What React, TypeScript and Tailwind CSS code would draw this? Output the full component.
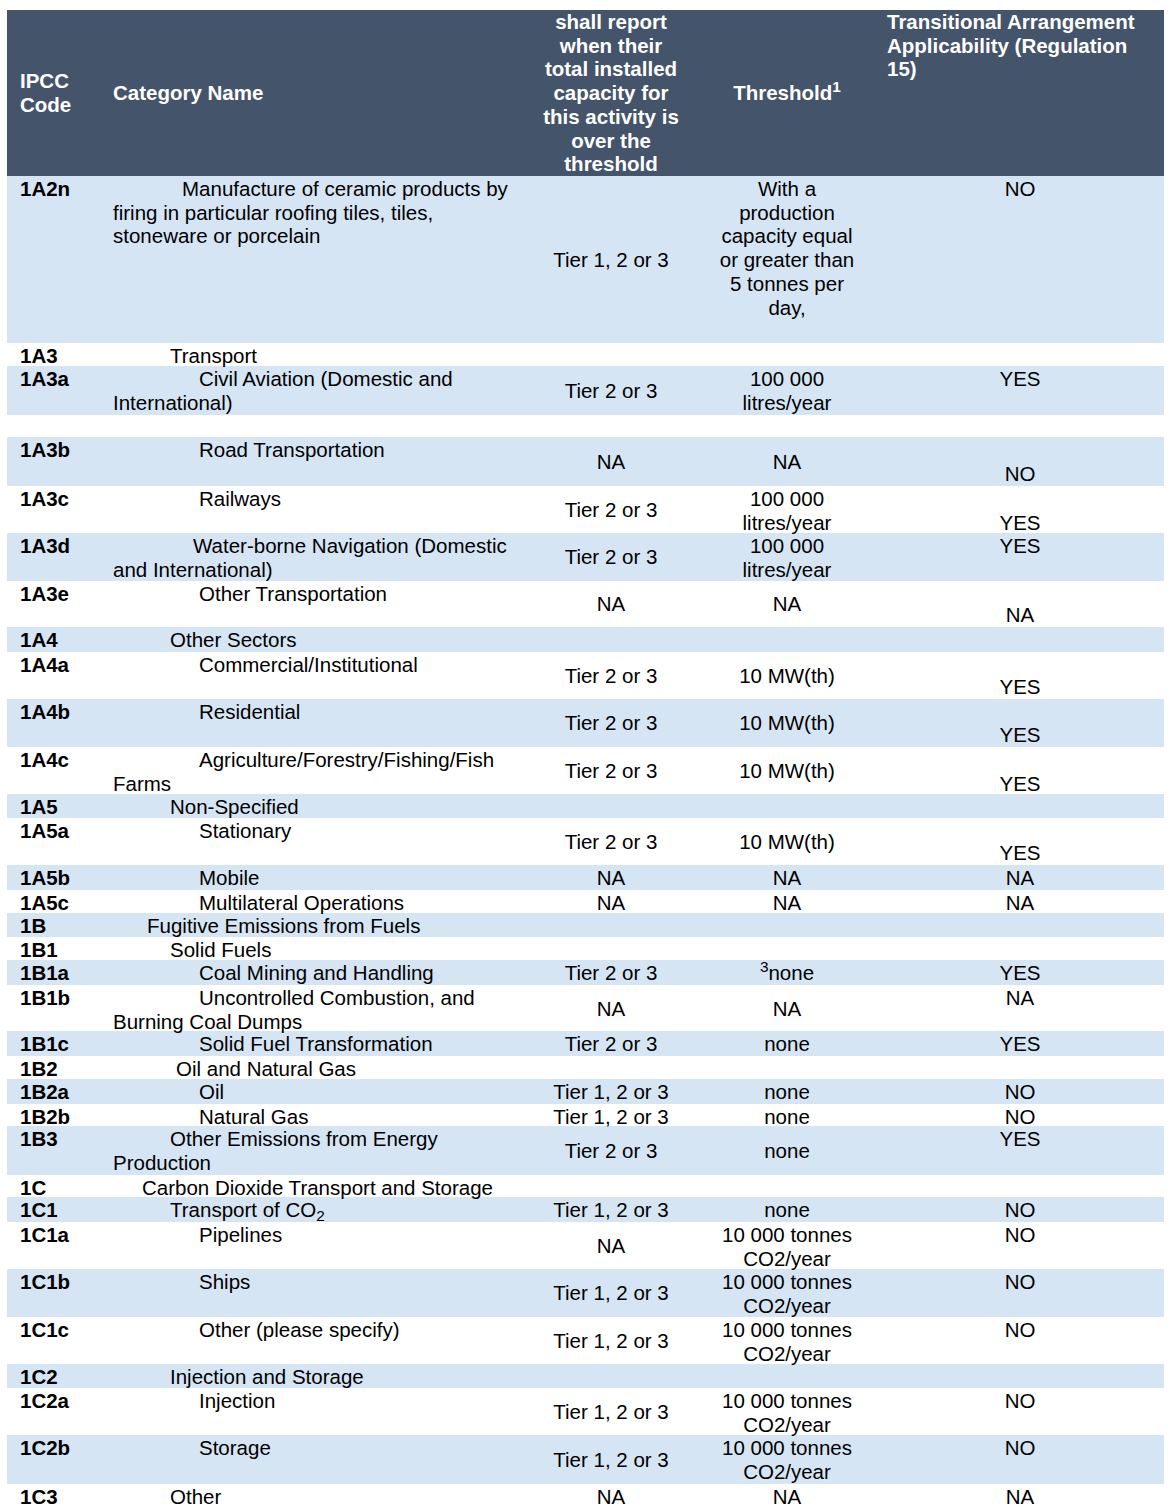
import type { ReactNode } from 'react';

type Align = 'top' | 'middle' | 'bottom';

type Cell = { text: ReactNode; align: Align };

type Row = {
  code: string;
  name: ReactNode;
  indent: string;
  height: string;
  tier?: Cell;
  threshold?: Cell;
  transitional?: Cell;
};

const COLS = 'grid grid-cols-[93px_424px_174px_178px_288px]';

const ALIGN: Record<Align, string> = {
  top: 'justify-start pt-px',
  middle: 'justify-center',
  bottom: 'justify-end',
};

const top = (text: ReactNode): Cell => ({ text, align: 'top' });
const mid = (text: ReactNode): Cell => ({ text, align: 'middle' });
const bot = (text: ReactNode): Cell => ({ text, align: 'bottom' });

const litres = (
  <>
    100 000
    <br />
    litres/year
  </>
);

const tonnes = (
  <>
    10 000 tonnes
    <br />
    CO2/year
  </>
);

const ROWS: Row[] = [
  {
    code: '1A2n',
    name: 'Manufacture of ceramic products by firing in particular roofing tiles, tiles, stoneware or porcelain',
    indent: 'indent-[69px]',
    height: 'h-[167px]',
    tier: mid('Tier 1, 2 or 3'),
    threshold: top('With a production capacity equal or greater than 5 tonnes per day,'),
    transitional: top('NO'),
  },
  { code: '1A3', name: 'Transport', indent: 'indent-[57px]', height: 'h-[23px]' },
  {
    code: '1A3a',
    name: 'Civil Aviation (Domestic and International)',
    indent: 'indent-[86px]',
    height: 'h-[49px]',
    tier: mid('Tier 2 or 3'),
    threshold: top(litres),
    transitional: top('YES'),
  },
  { code: '', name: '', indent: 'indent-0', height: 'h-[22px]' },
  {
    code: '1A3b',
    name: 'Road Transportation',
    indent: 'indent-[86px]',
    height: 'h-[49px]',
    tier: mid('NA'),
    threshold: mid('NA'),
    transitional: bot('NO'),
  },
  {
    code: '1A3c',
    name: 'Railways',
    indent: 'indent-[86px]',
    height: 'h-[47px]',
    tier: mid('Tier 2 or 3'),
    threshold: top(litres),
    transitional: bot('YES'),
  },
  {
    code: '1A3d',
    name: 'Water-borne Navigation (Domestic and International)',
    indent: 'indent-[80px]',
    height: 'h-[48px]',
    tier: mid('Tier 2 or 3'),
    threshold: top(litres),
    transitional: top('YES'),
  },
  {
    code: '1A3e',
    name: 'Other Transportation',
    indent: 'indent-[86px]',
    height: 'h-[46px]',
    tier: mid('NA'),
    threshold: mid('NA'),
    transitional: bot('NA'),
  },
  { code: '1A4', name: 'Other Sectors', indent: 'indent-[57px]', height: 'h-[25px]' },
  {
    code: '1A4a',
    name: 'Commercial/Institutional',
    indent: 'indent-[86px]',
    height: 'h-[47px]',
    tier: mid('Tier 2 or 3'),
    threshold: mid('10 MW(th)'),
    transitional: bot('YES'),
  },
  {
    code: '1A4b',
    name: 'Residential',
    indent: 'indent-[86px]',
    height: 'h-[48px]',
    tier: mid('Tier 2 or 3'),
    threshold: mid('10 MW(th)'),
    transitional: bot('YES'),
  },
  {
    code: '1A4c',
    name: 'Agriculture/Forestry/Fishing/Fish Farms',
    indent: 'indent-[86px]',
    height: 'h-[47px]',
    tier: mid('Tier 2 or 3'),
    threshold: mid('10 MW(th)'),
    transitional: bot('YES'),
  },
  { code: '1A5', name: 'Non-Specified', indent: 'indent-[57px]', height: 'h-[24px]' },
  {
    code: '1A5a',
    name: 'Stationary',
    indent: 'indent-[86px]',
    height: 'h-[47px]',
    tier: mid('Tier 2 or 3'),
    threshold: mid('10 MW(th)'),
    transitional: bot('YES'),
  },
  {
    code: '1A5b',
    name: 'Mobile',
    indent: 'indent-[86px]',
    height: 'h-[25px]',
    tier: mid('NA'),
    threshold: mid('NA'),
    transitional: mid('NA'),
  },
  {
    code: '1A5c',
    name: 'Multilateral Operations',
    indent: 'indent-[86px]',
    height: 'h-[23px]',
    tier: mid('NA'),
    threshold: mid('NA'),
    transitional: mid('NA'),
  },
  { code: '1B', name: 'Fugitive Emissions from Fuels', indent: 'indent-[34px]', height: 'h-[24px]' },
  { code: '1B1', name: 'Solid Fuels', indent: 'indent-[57px]', height: 'h-[23px]' },
  {
    code: '1B1a',
    name: 'Coal Mining and Handling',
    indent: 'indent-[86px]',
    height: 'h-[25px]',
    tier: mid('Tier 2 or 3'),
    threshold: mid(
      <>
        <sup>3</sup>none
      </>
    ),
    transitional: mid('YES'),
  },
  {
    code: '1B1b',
    name: 'Uncontrolled Combustion, and Burning Coal Dumps',
    indent: 'indent-[86px]',
    height: 'h-[46px]',
    tier: mid('NA'),
    threshold: mid('NA'),
    transitional: top('NA'),
  },
  {
    code: '1B1c',
    name: 'Solid Fuel Transformation',
    indent: 'indent-[86px]',
    height: 'h-[25px]',
    tier: mid('Tier 2 or 3'),
    threshold: mid('none'),
    transitional: mid('YES'),
  },
  { code: '1B2', name: 'Oil and Natural Gas', indent: 'indent-[63px]', height: 'h-[23px]' },
  {
    code: '1B2a',
    name: 'Oil',
    indent: 'indent-[86px]',
    height: 'h-[25px]',
    tier: mid('Tier 1, 2 or 3'),
    threshold: mid('none'),
    transitional: mid('NO'),
  },
  {
    code: '1B2b',
    name: 'Natural Gas',
    indent: 'indent-[86px]',
    height: 'h-[22px]',
    tier: mid('Tier 1, 2 or 3'),
    threshold: mid('none'),
    transitional: mid('NO'),
  },
  {
    code: '1B3',
    name: 'Other Emissions from Energy Production',
    indent: 'indent-[57px]',
    height: 'h-[49px]',
    tier: mid('Tier 2 or 3'),
    threshold: mid('none'),
    transitional: top('YES'),
  },
  { code: '1C', name: 'Carbon Dioxide Transport and Storage', indent: 'indent-[29px]', height: 'h-[22px]' },
  {
    code: '1C1',
    name: (
      <>
        Transport of CO<sub>2</sub>
      </>
    ),
    indent: 'indent-[57px]',
    height: 'h-[25px]',
    tier: mid('Tier 1, 2 or 3'),
    threshold: mid('none'),
    transitional: mid('NO'),
  },
  {
    code: '1C1a',
    name: 'Pipelines',
    indent: 'indent-[86px]',
    height: 'h-[47px]',
    tier: mid('NA'),
    threshold: top(tonnes),
    transitional: top('NO'),
  },
  {
    code: '1C1b',
    name: 'Ships',
    indent: 'indent-[86px]',
    height: 'h-[48px]',
    tier: mid('Tier 1, 2 or 3'),
    threshold: top(tonnes),
    transitional: top('NO'),
  },
  {
    code: '1C1c',
    name: 'Other (please specify)',
    indent: 'indent-[86px]',
    height: 'h-[47px]',
    tier: mid('Tier 1, 2 or 3'),
    threshold: top(tonnes),
    transitional: top('NO'),
  },
  { code: '1C2', name: 'Injection and Storage', indent: 'indent-[57px]', height: 'h-[24px]' },
  {
    code: '1C2a',
    name: 'Injection',
    indent: 'indent-[86px]',
    height: 'h-[47px]',
    tier: mid('Tier 1, 2 or 3'),
    threshold: top(tonnes),
    transitional: top('NO'),
  },
  {
    code: '1C2b',
    name: 'Storage',
    indent: 'indent-[86px]',
    height: 'h-[49px]',
    tier: mid('Tier 1, 2 or 3'),
    threshold: top(tonnes),
    transitional: top('NO'),
  },
  {
    code: '1C3',
    name: 'Other',
    indent: 'indent-[57px]',
    height: 'h-[26px]',
    tier: top('NA'),
    threshold: top('NA'),
    transitional: top('NA'),
  },
];

function ValueCell({ cell, className }: { cell?: Cell; className: string }) {
  if (!cell) {
    return <div className={className} />;
  }
  return (
    <div className={`flex flex-col text-center ${ALIGN[cell.align]} ${className}`}>
      <div>{cell.text}</div>
    </div>
  );
}

function HeaderRow() {
  return (
    <div className={`${COLS} h-[166px] bg-[#44546a] font-bold text-white`}>
      <div className="flex items-center pl-[13px]">
        <span>
          IPCC
          <br />
          Code
        </span>
      </div>
      <div className="flex items-center pl-[13px]">Category Name</div>
      <div className="px-[12px] text-center">
        shall report when their total installed capacity for this activity is over the threshold
      </div>
      <div className="flex items-center justify-center px-[14px]">
        <span>
          Threshold<sup>1</sup>
        </span>
      </div>
      <div className="px-[11px]">Transitional Arrangement Applicability (Regulation 15)</div>
    </div>
  );
}

function DataRow({ row, shaded }: { row: Row; shaded: boolean }) {
  return (
    <div className={`${COLS} ${row.height} ${shaded ? 'bg-[#d6e5f4]' : 'bg-white'}`}>
      <div className="pl-[13px] pt-px font-bold">{row.code}</div>
      <div className={`pl-[13px] pr-[4px] pt-px ${row.indent}`}>{row.name}</div>
      <ValueCell cell={row.tier} className="px-[12px]" />
      <ValueCell cell={row.threshold} className="px-[14px]" />
      <ValueCell cell={row.transitional} className="px-[11px]" />
    </div>
  );
}

export default function App() {
  return (
    <div className="h-[1511px] overflow-hidden bg-white pl-[7px] pt-[10px] font-['Liberation_Sans',Arial,sans-serif] text-[20.5px] leading-[23.7px] text-black">
      <div className="w-[1157px]">
        <HeaderRow />
        {ROWS.map((row, index) => (
          <DataRow key={row.code || `gap-${index}`} row={row} shaded={index % 2 === 0} />
        ))}
      </div>
    </div>
  );
}
